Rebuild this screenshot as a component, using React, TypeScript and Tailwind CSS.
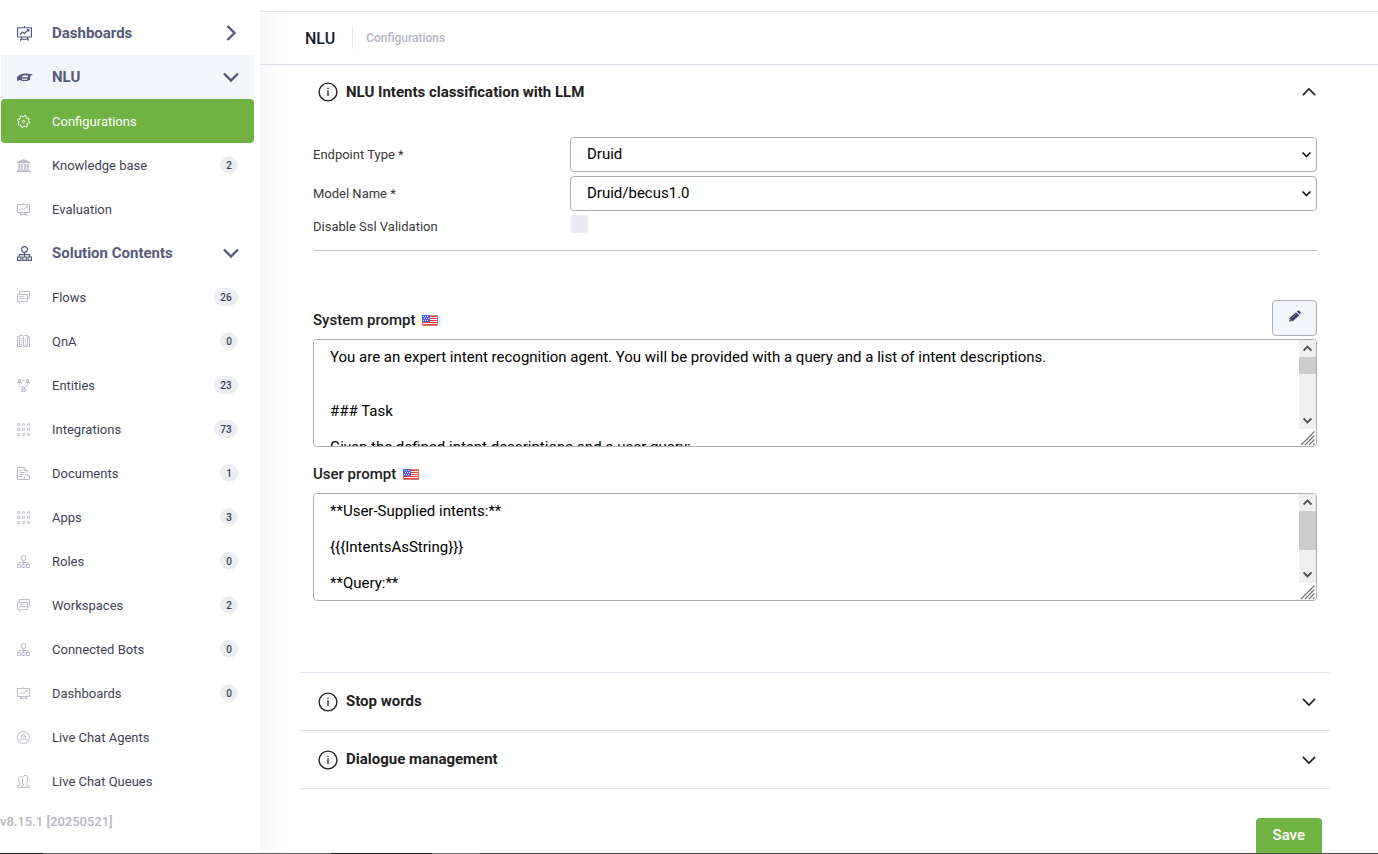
import { useState, type ReactNode } from "react";

type IconName =
  | "board"
  | "cap"
  | "tree"
  | "gear"
  | "bank"
  | "cards"
  | "book"
  | "entities"
  | "grid"
  | "document"
  | "agent"
  | "queue";

const dots = [0.5, 5.5, 10.5];

const shapes: Record<IconName, ReactNode> = {
  board: (
    <>
      <path d="M0.5 1.5h12v8H0.5zM6.5 0v1.5M4 9.500v2h5v-2M3 12.800l1.200-3M10 12.800l-1.200-3" />
      <path d="M2.4 7.6l2.5-2.4 1.6 1.3 3.4-3.2M8.4 3.2h1.8v1.7" />
    </>
  ),
  cap: (
    <path
      d="M3 3.900 5.500 3H9l4.300.7v.8l-1.600.3-.4 3.600L9 9.600H4.200L2.500 8.600H1.600v.8H0V6.200l.9-1zM4.200 5.300l2.800-.8 2.800.4-.7 1.400H4.600zM4 7.500l5-.2-.3 1.200H4.400z"
      fill="currentColor"
      fillRule="evenodd"
      stroke="none"
    />
  ),
  tree: (
    <>
      <circle cx="6.5" cy="3" r="2.5" />
      <path d="M6.5 5.5V9M2 9V7.5h9V9M0.5 9.500h3v3h-3zM5 9.500h3v3H5zM9.500 9.500h3v3h-3z" />
    </>
  ),
  gear: (
    <>
      <circle cx="6.5" cy="6.5" r="5.9" strokeWidth="1.100" strokeDasharray="2.317 2.317" />
      <circle cx="6.5" cy="6.5" r="4.8" strokeWidth="1.100" strokeDasharray="2.100 1.670" strokeDashoffset="-1.780" />
      <circle cx="6.5" cy="6.5" r="1.100" />
    </>
  ),
  bank: (
    <path
      d="M6.5 0 13 2.8v1.4H0V2.8zM1.3 5h2v5h-2zM4.1 5h1.6v5H4.1zM7.2 5h1.6v5H7.2zM9.7 5h2v5h-2zM.7 10.4h11.6v1.1H.7zM0 11.8h14V13H0z"
      fill="currentColor"
      stroke="none"
    />
  ),
  cards: (
    <>
      <path d="M2.5 3V.5h10V7l-1.5 1.5" />
      <path d="M.5 3.5h10v7H4.6L3 12.3 2.5 10.5h-2zM2.5 5.500h4M2.5 7.500h6" />
    </>
  ),
  book: (
    <path d="M.5 1.5h2v-1h3l1 1 1-1h3v1h2v10h-5l-1 1-1-1h-5zM2.5 1.5v8.5h3l1 1 1-1h3V1.5M6.5 1.5v9.5M3.8 3.2l1.4.6M3.8 5.2l1.4.6M3.8 7.2l1.4.6M9.2 3.2l-1.4.6M9.2 5.2l-1.4.6M9.2 7.2l-1.4.6" />
  ),
  entities: (
    <>
      <path d="M1.5.5h2v2h-2zM9.5.5h2v2h-2zM5.5 8h2v2h-2zM.5 4.5v-1h4v1M8.5 4.5v-1h4v1M4.5 12.5v-2h4v2z" />
      <path d="M5 1.5h3M1.8 5.2 4.4 8.6M11.2 5.2 8.6 8.6" />
    </>
  ),
  grid: (
    <>
      {dots.map((y) =>
        dots.map((x) => <rect key={`${x}-${y}`} x={x} y={y} width="2" height="2" rx="0.6" />),
      )}
    </>
  ),
  document: (
    <>
      <path d="M7 12.5H.5V.5h7l2.5 3V6M7.2.5v3H10M2.3 3.5h3.2M2.3 5.5h5.4M2.3 7.5h4.2M2.3 9.5h3.4" />
      <path d="M7.2 12.5V9.8l1.2-1 .6-1.3h1.6v1.6h1.9v3.4z" />
    </>
  ),
  agent: (
    <>
      <circle cx="6.5" cy="6.5" r="6" />
      <path d="M4.4 5.6c0-1.6.8-2.6 2.1-2.6s2.1 1 2.1 2.6-.8 2.5-2.1 2.5-2.1-.9-2.1-2.5zM2.4 10.4c.4-1.2 1.2-1.8 2.6-2.2M10.6 10.4C10.200 9.200 9.400 8.600 8 8.200M4.400 5.400 6 4.800l2.600.8" />
    </>
  ),
  queue: (
    <>
      <path d="M5.500 8.500V2.500l1.500-2h2.500l1.200 2v4l-1.200 2v2l3 1v1H4.200v-1l2.300-1v-1.500z" />
      <path d="M4.800 1.500H3L1.800 3v3.500l1 1.500v2L.5 11v1.500h3.700" />
    </>
  ),
};

function NavIcon({ name, className }: { name: IconName; className: string }) {
  return (
    <svg
      viewBox="0 0 13 13"
      className={`shrink-0 overflow-visible ${className}`}
      fill="none"
      stroke="currentColor"
      aria-hidden="true"
    >
      {shapes[name]}
    </svg>
  );
}

function Chevron({ className, width }: { className: string; width: number }) {
  return (
    <svg viewBox="0 0 16 16" className={`shrink-0 ${className}`} fill="none" stroke="currentColor" strokeWidth={width} aria-hidden="true">
      <path d="M1 4.500l7 7 7-7" />
    </svg>
  );
}

type Item = { label: string; icon: IconName; count?: number; active?: boolean };

const nluItems: Item[] = [
  { label: "Configurations", icon: "gear", active: true },
  { label: "Knowledge base", icon: "bank", count: 2 },
  { label: "Evaluation", icon: "board" },
];

const solutionItems: Item[] = [
  { label: "Flows", icon: "cards", count: 26 },
  { label: "QnA", icon: "book", count: 0 },
  { label: "Entities", icon: "entities", count: 23 },
  { label: "Integrations", icon: "grid", count: 73 },
  { label: "Documents", icon: "document", count: 1 },
  { label: "Apps", icon: "grid", count: 3 },
  { label: "Roles", icon: "tree", count: 0 },
  { label: "Workspaces", icon: "cards", count: 2 },
  { label: "Connected Bots", icon: "tree", count: 0 },
  { label: "Dashboards", icon: "board", count: 0 },
  { label: "Live Chat Agents", icon: "agent" },
  { label: "Live Chat Queues", icon: "queue" },
];

function NavGroup({ label, icon, open, shaded }: { label: string; icon: IconName; open?: boolean; shaded?: boolean }) {
  return (
    <button
      type="button"
      aria-expanded={!!open}
      className={`flex h-11 w-full items-center pr-[15px] pl-4 text-[15px] font-bold text-[#575a7b] ${shaded ? "bg-[#f2f6fa]" : ""}`}
    >
      <span className="flex w-[35px] items-center">
        <NavIcon name={icon} className="size-[15px]" />
      </span>
      <span className="flex-1 text-left">{label}</span>
      <Chevron className={open ? "size-4" : "size-4 -rotate-90"} width={2.4} />
    </button>
  );
}

function NavItem({ label, icon, count, active }: Item) {
  return (
    <a
      href="#"
      aria-current={active ? "page" : undefined}
      className={`flex h-11 items-center rounded-sm pr-4 pl-4 text-[13px] ${active ? "bg-[#70b244] text-white" : "text-[#3f4254]"}`}
    >
      <span className={`flex w-[35px] items-center pt-px ${active ? "text-white" : "text-[#bcbccd]"}`}>
        <NavIcon name={icon} className="size-[13px]" />
      </span>
      <span className="flex-1 pt-0.5">{label}</span>
      {count !== undefined && (
        <span
          className={`flex h-[18px] items-center justify-center rounded-full bg-[#ebedf3] pt-px text-[10px] font-medium ${count > 9 ? "w-6" : "w-[18px]"}`}
        >
          {count}
        </span>
      )}
    </a>
  );
}

function Flag() {
  return (
    <svg viewBox="0 0 16 11" className="h-[11px] w-4" role="img" aria-label="English (US)">
      <rect width="16" height="11" fill="#fff" />
      {[1, 3, 5, 7, 9].map((y) => (
        <rect key={y} y={y} width="16" height="1" fill="#ec3a40" />
      ))}
      <rect width="8" height="7" fill="#5560e2" />
      {[1, 3, 5].map((y) =>
        [1, 3, 5].map((x) => <rect key={`${x}-${y}`} x={y === 3 ? x + 1 : x} y={y} width="1" height="1" fill="#d6d8fb" />),
      )}
      <path d="M8 .5h7.500v10H.5V7" fill="none" stroke="#c98570" />
    </svg>
  );
}

function SelectField({ id, label, options }: { id: string; label: string; options: string[] }) {
  return (
    <>
      <label htmlFor={id} className="text-[13px] text-[#3a3a3a]">
        {label}
      </label>
      <div className="relative">
        <select
          id={id}
          className="h-[35px] w-full appearance-none rounded-sm border border-[#afafaf] bg-white px-4 text-[15px] text-black"
        >
          {options.map((o) => (
            <option key={o}>{o}</option>
          ))}
        </select>
        <Chevron className="pointer-events-none absolute top-[13px] right-1.5 size-[9px] text-black" width={2.800} />
      </div>
    </>
  );
}

function ScrollRail({ thumb }: { thumb: string }) {
  return (
    <div className="pointer-events-none absolute top-px right-px bottom-px flex w-[17px] flex-col" aria-hidden="true">
      <div className="flex flex-1 flex-col rounded-tr-sm bg-[#f0f0f0]">
        <div className="flex h-[17px] items-center justify-center text-[#505050]">
          <Chevron className="size-[9px] rotate-180" width={3.400} />
        </div>
        <div className={`bg-[#cdcdcd] ${thumb}`} />
        <div className="mt-auto flex h-[17px] items-center justify-center text-[#505050]">
          <Chevron className="size-[9px]" width={3.400} />
        </div>
      </div>
      <svg viewBox="0 0 17 17" className="size-[17px]" stroke="#6f6f6f" strokeWidth="1.100">
        <path d="M2 16 15.500 2.500M6 16 15.500 6.500M10 16l5.500-5.500M14 16l1.500-1.500" />
      </svg>
    </div>
  );
}

function PromptBox({ id, value, thumb }: { id: string; value: string; thumb: string }) {
  return (
    <div className="relative">
      <textarea
        id={id}
        defaultValue={value}
        spellCheck={false}
        className="block h-[108px] w-full resize-none rounded-sm border border-[#afafaf] bg-white py-2 pr-8 pl-4 text-[15px] leading-[18px] text-black [scrollbar-width:none]"
      />
      <ScrollRail thumb={thumb} />
    </div>
  );
}

function Section({ title, initiallyOpen, children }: { title: string; initiallyOpen?: boolean; children?: ReactNode }) {
  const [open, setOpen] = useState(!!initiallyOpen);
  return (
    <section className="border-b border-[#dcdfe9]">
      <button
        type="button"
        aria-expanded={open}
        onClick={() => setOpen(!open)}
        className={`flex w-full items-center gap-2 pr-[14px] pl-[18px] text-[#212121] ${initiallyOpen ? "h-[54px]" : "h-[57px]"}`}
      >
        <svg viewBox="0 0 20 20" className="size-5 shrink-0" fill="none" stroke="currentColor" aria-hidden="true">
          <circle cx="10" cy="10" r="8.900" strokeWidth="1.400" />
          <path d="M10 8.300V14" strokeWidth="1.300" />
          <path d="M10 5.700v1.400" strokeWidth="1.400" />
        </svg>
        <span className="flex-1 text-left text-[15px] font-bold">{title}</span>
        <Chevron className={open ? "size-[14px] rotate-180" : "size-[14px]"} width={2} />
      </button>
      {open && children}
    </section>
  );
}

const systemPrompt = `You are an expert intent recognition agent. You will be provided with a query and a list of intent descriptions.


### Task

Given the defined intent descriptions and a user query:
`;

const userPrompt = `**User-Supplied intents:**

{{{IntentsAsString}}}

**Query:**
`;

export default function App() {
  return (
    <div className="flex min-h-screen flex-col bg-white font-[Roboto,sans-serif]">
      <div className="flex flex-1">
        <aside className="w-[260px] shrink-0 pt-[11px]">
          <nav className="mr-1.5 ml-px">
            <NavGroup label="Dashboards" icon="board" />
            <NavGroup label="NLU" icon="cap" open shaded />
            {nluItems.map((item) => (
              <NavItem key={item.label} {...item} />
            ))}
            <NavGroup label="Solution Contents" icon="tree" open />
            {solutionItems.map((item) => (
              <NavItem key={item.label} {...item} />
            ))}
          </nav>
          <p className="pt-[9px] text-[13px] leading-5 font-medium text-[#b5b5c3]">v8.15.1 [20250521]</p>
        </aside>

        <main className="mt-[11px] flex min-w-0 flex-1 flex-col border-t border-[#dcdfe9] bg-[linear-gradient(to_right,#f8f8fa,#ffffff_28px)]">
          <header className="flex h-[53px] items-center border-b border-[#d9dde8] pl-[45px]">
            <h1 className="pt-0.5 text-base font-medium text-[#181c32]">NLU</h1>
            <span className="mr-[13px] ml-[17px] h-[22px] w-px bg-[#e4e6ef]" />
            <a href="#" className="text-xs font-medium text-[#b5b5c3]">
              Configurations
            </a>
          </header>

          <form className="flex flex-col pr-12 pl-10" onSubmit={(e) => e.preventDefault()}>
            <Section title="NLU Intents classification with LLM" initiallyOpen>
              <div className="px-[13px] pt-[18px] pb-[71px]">
                <div className="grid grid-cols-[257px_1fr] items-center gap-y-1 border-b border-[#c6c6c6] pb-[13px]">
                  <SelectField id="endpoint" label="Endpoint Type *" options={["Druid"]} />
                  <SelectField id="model" label="Model Name *" options={["Druid/becus1.0"]} />
                  <label htmlFor="ssl" className="pt-0.5 text-[13px] leading-5 text-[#3a3a3a]">
                    Disable Ssl Validation
                  </label>
                  <input id="ssl" type="checkbox" className="size-[18px] appearance-none self-start rounded-sm bg-[#ebecf2] checked:bg-[#70b244]" />
                </div>

                <div className="mt-[49px] mb-[3px] flex items-center justify-between">
                  <label htmlFor="system" className="flex items-center gap-1.5 pt-1 text-[15px] font-medium text-[#212121]">
                    System prompt <Flag />
                  </label>
                  <button
                    type="button"
                    aria-label="Edit system prompt"
                    className="flex h-9 w-[45px] items-center justify-center rounded-sm border border-[#afafaf] bg-[#f2f6fa] pb-1 text-[#3a3d5c]"
                  >
                    <svg viewBox="0 0 12 12" className="size-3" aria-hidden="true">
                      <path d="M.2 11.500.6 8 7 2.300 10.200 5.300 4 11z" fill="currentColor" />
                      <path d="M7.800 1.600 9 .6Q9.500.3 10 .6L11.700 2.200Q12 2.700 11.600 3.200L10.900 4.400z" fill="currentColor" />
                      <path d="M3 8 7.600 3.900" stroke="#aab0cf" strokeWidth="0.700" />
                      <path d="M1.100 9.300l1.600 1.500" stroke="#d9dcea" strokeWidth="0.700" />
                    </svg>
                  </button>
                </div>
                <PromptBox id="system" value={systemPrompt} thumb="h-[17px]" />

                <label htmlFor="user" className="flex h-[46px] items-center gap-[7px] pt-2 text-[15px] font-medium text-[#212121]">
                  User prompt <Flag />
                </label>
                <PromptBox id="user" value={userPrompt} thumb="h-[39px]" />
              </div>
            </Section>
            <Section title="Stop words" />
            <Section title="Dialogue management" />
            <button
              type="submit"
              className="mt-[29px] mr-2 h-[35px] self-end rounded-t-sm bg-[#70b244] px-[17px] text-[15px] font-medium text-white"
            >
              Save
            </button>
          </form>
        </main>
      </div>
      <footer className="flex h-px bg-[#4a4a4a]">
        <span className="w-[43px] bg-[#1f1f1f]" />
        <span className="w-72 bg-[#5c5c5c]" />
        <span className="w-[101px] bg-[#1c1c1c]" />
        <span className="w-12 bg-[#6b6b6b]" />
      </footer>
    </div>
  );
}
